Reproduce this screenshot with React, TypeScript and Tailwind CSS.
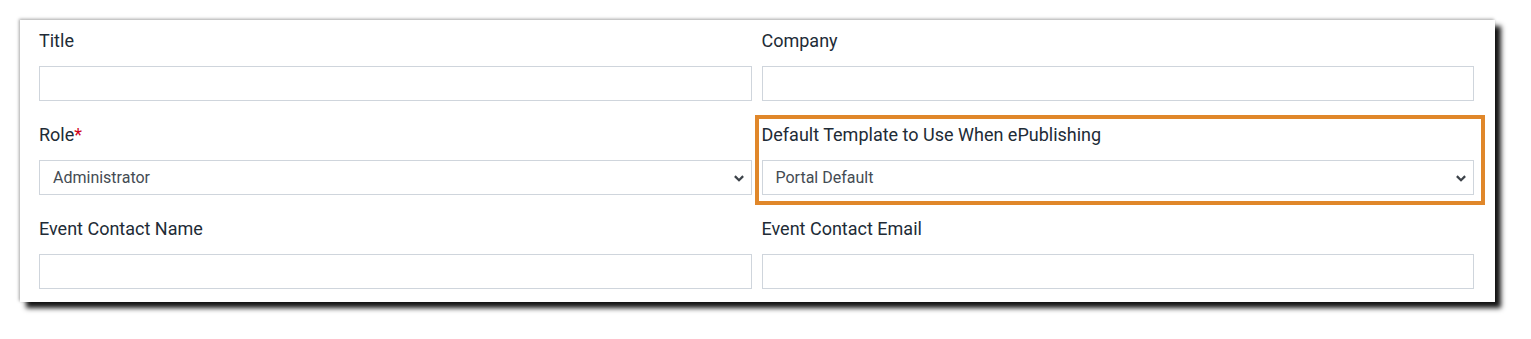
const font = { fontFamily: 'Roboto, "Liberation Sans", sans-serif' };

function Label({ text, required }: { text: string; required?: boolean }) {
  return (
    <div className="h-[24px] text-[18px] leading-[24px] text-[#212b36]">
      {text}
      {required && <span className="text-[#d0021b]">*</span>}
    </div>
  );
}

function TextBox() {
  return <div className="mt-[13px] h-[35px] border border-[#cfd5dc] bg-white"></div>;
}

function Select({ value }: { value: string }) {
  return (
    <div className="mt-[13px] flex h-[35px] items-center justify-between border border-[#cfd5dc] bg-white pl-[13px] pr-[6px]">
      <span className="text-[16px] text-[#444b53]">{value}</span>
      <svg width="12" height="12" viewBox="0 0 16 16" fill="none">
        <path d="M2.5 5.5l5.5 5.5 5.5-5.5" stroke="#3d434a" strokeWidth="3" />
      </svg>
    </div>
  );
}

export default function App() {
  return (
    <div className="h-[339px] w-[1531px] bg-white pl-[20px] pt-[20px]" style={font}>
      <div className="w-[1475px] bg-white pb-[13px] pl-[19px] pr-[21px] pt-[9px] shadow-[6px_6px_5px_rgba(0,0,0,0.92),_-1px_-1px_3px_rgba(0,0,0,0.35)]">
        <div className="grid grid-cols-2 gap-x-[10px] gap-y-[22px]">
          <div>
            <Label text="Title" />
            <TextBox />
          </div>
          <div>
            <Label text="Company" />
            <TextBox />
          </div>
          <div>
            <Label text="Role" required />
            <Select value="Administrator" />
          </div>
          <div className="relative">
            <Label text="Default Template to Use When ePublishing" />
            <Select value="Portal Default" />
            <div className="absolute -bottom-[10px] -left-[7px] -right-[11px] -top-[8px] border-4 border-[#e0872a]"></div>
          </div>
          <div>
            <Label text="Event Contact Name" />
            <TextBox />
          </div>
          <div>
            <Label text="Event Contact Email" />
            <TextBox />
          </div>
        </div>
      </div>
    </div>
  );
}
